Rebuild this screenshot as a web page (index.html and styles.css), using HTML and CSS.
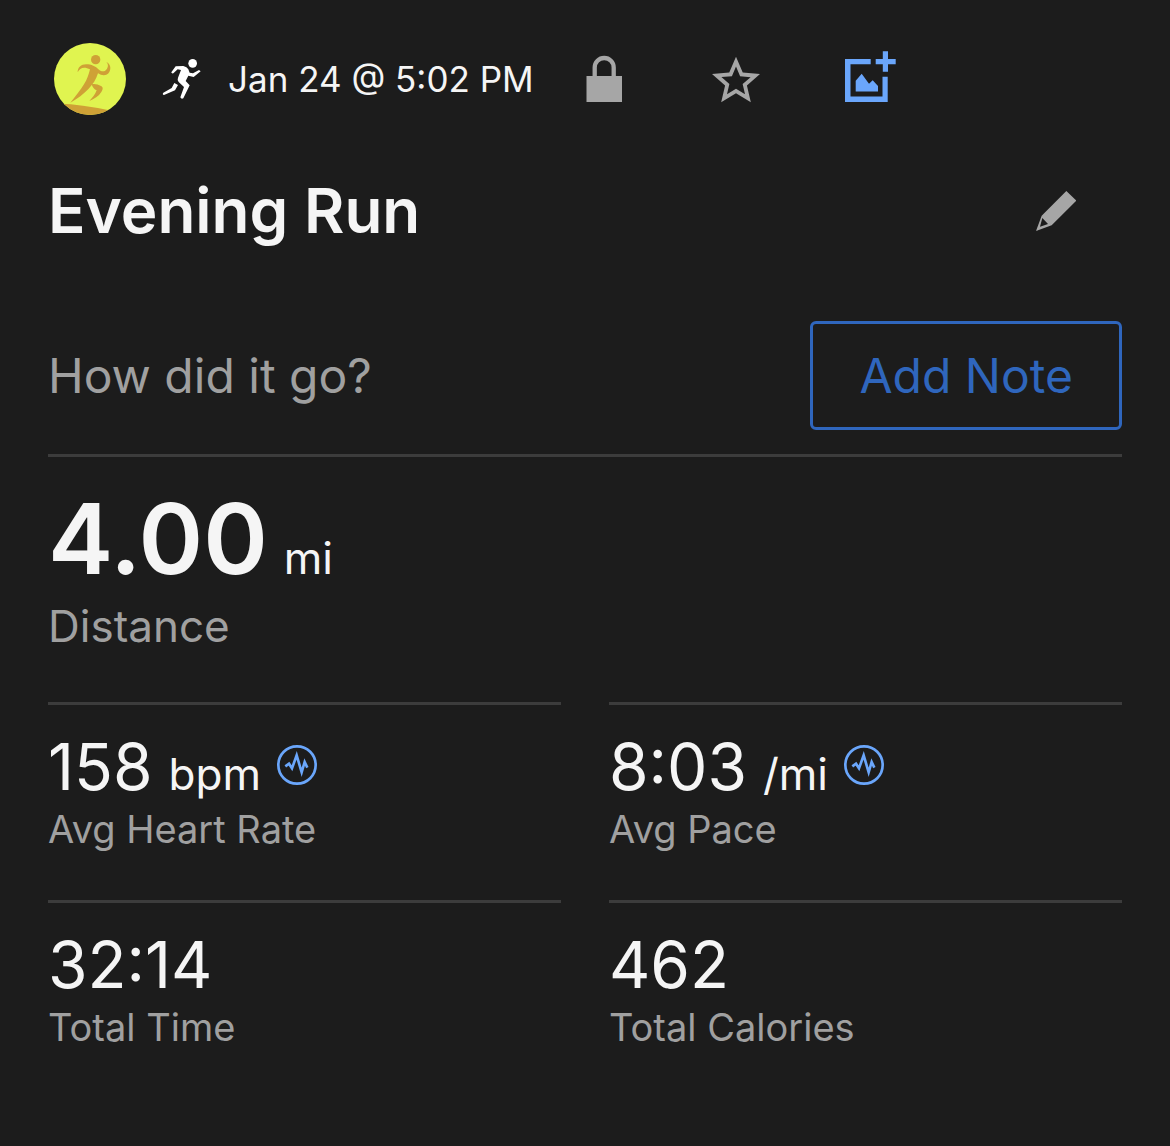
FILE: index.html
```
<!DOCTYPE html>
<html lang="en">
<head>
    <meta charset="UTF-8">
    <meta name="viewport" content="width=device-width, initial-scale=1.0">
    <title>Evening Run</title>
    <link rel="stylesheet" href="styles.css">
</head>
<body>

    <main class="activity">
        <!-- Avatar, date and quick actions -->
        <header class="activity-header">
            <svg class="avatar" viewBox="42 39 216 216" role="img" aria-label="Profile">
                <clipPath id="avatarClip"><circle cx="150" cy="147" r="108"/></clipPath>
                <g clip-path="url(#avatarClip)">
                    <rect x="42" y="39" width="216" height="216" fill="#e0f450"/>
                    <g fill="#cfa136">
                        <path d="M60 221Q120 222 215 242V260H60z"/>
                        <circle cx="167" cy="89" r="14"/>
                        <path d="M113 127C113 112 123 103 138 103C155 103 166 109 177 119C187 127 196 124 201 116C206 108 204 101 199 96C211 102 214 114 208 126C201 138 187 139 174 130C169 148 158 164 146 176C131 192 113 205 91 218C107 198 122 179 132 163C141 149 146 134 150 118C134 109 119 112 113 127z"/>
                        <path d="M155 163C163 160 174 163 183 168C190 172 189 178 184 186C176 199 163 207 148 213C158 203 166 192 170 181C163 179 157 172 155 163z"/>
                    </g>
                </g>
            </svg>
            <svg class="sport-icon" viewBox="364 84 120 126" role="img" aria-label="Run">
                <g fill="#ffffff">
                    <circle cx="456" cy="100" r="13"/>
                    <path d="M392 127L405 109L428 108Q439 110 443 118L447 128L457 130L475 120L480 124L459 141L443 137L435 153L447 166L428 205Q422 209 419 202L430 171L414 156Q409 150 412 143L421 120L411 118L398 130Q392 131 392 127z"/>
                    <path d="M401 159L412 165L403 181L370 195Q364 193 368 188L393 174z"/>
                </g>
            </svg>
            <time class="activity-date">Jan 24 @ 5:02 PM</time>
            <div class="header-actions">
                <button class="icon-button" type="button" aria-label="Privacy">
                    <svg class="icon" viewBox="0 0 48 48">
                        <rect x="6.5" y="21" width="35.5" height="26" fill="#a6a6a6"/>
                        <path d="M14.7 22V12.5a9.5 9.5 0 0 1 19 0V22" fill="none" stroke="#a6a6a6" stroke-width="4.3"/>
                    </svg>
                </button>
                <button class="icon-button" type="button" aria-label="Favorite">
                    <svg class="icon" viewBox="2 1.3 20 20">
                        <path fill="#a6a6a6" d="M22 9.24l-7.19-.62L12 2 9.19 8.63 2 9.24l5.46 4.73L5.82 21 12 17.27 18.18 21l-1.63-7.03L22 9.24zM12 15.4l-3.76 2.27 1-4.28-3.32-2.88 4.38-.38L12 6.1l1.71 4.04 4.38.38-3.32 2.88 1 4.28L12 15.4z"/>
                    </svg>
                </button>
                <button class="icon-button" type="button" aria-label="Add photo">
                    <svg class="icon-photo" viewBox="0 0 56 56">
                        <g fill="#6aa6fb">
                            <path d="M30.7 8H5v43h42.7V25.7h-5.2v19.8H10.5V13.2h20.2z"/>
                            <path d="M42.8.3h5.2V8h7.7v5.2H48v7.5h-5.2v-7.5h-7.1V8h7.1z"/>
                            <path d="M15.7 40.5V29.7l6-7L29 32.7l3.7-3.4L38 35v5.5z"/>
                        </g>
                    </svg>
                </button>
            </div>
        </header>

        <!-- Title -->
        <div class="title-row">
            <h1>Evening Run</h1>
            <button class="icon-button" type="button" aria-label="Edit name">
                <svg class="icon-edit" viewBox="48 33 120 120">
                    <path fill="#a6a6a6" fill-rule="evenodd" d="M139 33L169 62L95 136L48 153L65 107zM67 114L60 140L84 132z"/>
                </svg>
            </button>
        </div>

        <!-- Note -->
        <div class="note-row">
            <p>How did it go?</p>
            <button class="note-button" type="button">Add Note</button>
        </div>

        <!-- Stats -->
        <section class="stats">
            <div class="stat stat-main">
                <div class="stat-value">4.00 <span class="unit">mi</span></div>
                <div class="stat-label">Distance</div>
            </div>
            <div class="stat">
                <div class="stat-value">158 <span class="unit">bpm</span>
                    <button class="chart-button" type="button" aria-label="Heart rate chart">
                        <svg class="icon-chart" viewBox="714 49 120 120">
                            <circle cx="774" cy="109" r="56"/>
                            <path d="M739 113L750 105L759 119L773 80L788 131L797 100L805 117"/>
                        </svg>
                    </button>
                </div>
                <div class="stat-label">Avg Heart Rate</div>
            </div>
            <div class="stat">
                <div class="stat-value">8:03 <span class="unit">/mi</span>
                    <button class="chart-button" type="button" aria-label="Pace chart">
                        <svg class="icon-chart" viewBox="714 49 120 120">
                            <circle cx="774" cy="109" r="56"/>
                            <path d="M739 113L750 105L759 119L773 80L788 131L797 100L805 117"/>
                        </svg>
                    </button>
                </div>
                <div class="stat-label">Avg Pace</div>
            </div>
            <div class="stat">
                <div class="stat-value">32:14</div>
                <div class="stat-label">Total Time</div>
            </div>
            <div class="stat">
                <div class="stat-value">462</div>
                <div class="stat-label">Total Calories</div>
            </div>
        </section>
    </main>

</body>
</html>
```
FILE: styles.css
```
/* Base Styling */
* {
    box-sizing: border-box;
}
body {
    font-family: Inter, "Liberation Sans", sans-serif;
    background-color: #1c1c1c;
    color: #f5f5f5;
    margin: 0;
}
h1, p {
    margin: 0;
}
button {
    font-family: inherit;
    background: none;
    border: none;
    padding: 0;
    cursor: pointer;
}
svg {
    display: block;
}
.activity {
    padding: 43px 48px;
}

/* Header */
.activity-header {
    display: flex;
    align-items: center;
    padding-left: 6px;
}
.avatar {
    width: 72px;
    height: 72px;
    margin-right: 36px;
}
.sport-icon {
    width: 40px;
    height: 42px;
    margin-right: 26px;
}
.activity-date {
    font-size: 35px;
    line-height: 44px;
    margin-right: 4px;
    white-space: nowrap;
}
.header-actions {
    display: flex;
}
.icon-button {
    display: flex;
    justify-content: center;
    align-items: center;
    width: 132px;
    height: 72px;
}
.icon {
    width: 48px;
    height: 48px;
}
.icon-photo {
    width: 56px;
    height: 56px;
}
.icon-edit {
    width: 40px;
    height: 40px;
}

/* Title and note */
.title-row, .note-row {
    display: flex;
    justify-content: space-between;
    align-items: center;
}
.title-row {
    margin-top: 56px;
    margin-bottom: 70px;
}
.title-row h1 {
    font-size: 62px;
    font-weight: 600;
    line-height: 80px;
}
.note-row {
    margin-bottom: 24px;
}
.note-row p {
    color: #a0a0a0;
    font-size: 48px;
    line-height: 60px;
}
.note-button {
    border: 3px solid #2f66bd;
    border-radius: 6px;
    color: #2f66bd;
    font-size: 48px;
    line-height: 59px;
    padding: 22px 46px;
}

/* Stats */
.stats {
    display: grid;
    grid-template-columns: 1fr 1fr;
    column-gap: 48px;
}
.stat {
    border-top: 3px solid #3c3c3c;
    padding: 22px 0 49px;
}
.stat-main {
    grid-column: 1 / -1;
}
.stat-value {
    display: flex;
    align-items: baseline;
    gap: 16px;
    font-size: 64px;
    line-height: 80px;
}
.stat-main .stat-value {
    font-size: 98px;
    font-weight: 600;
    line-height: 120px;
}
.unit {
    font-size: 44px;
    font-weight: 400;
    line-height: 44px;
}
.stat-label {
    color: #a0a0a0;
    font-size: 38px;
    line-height: 44px;
}
.stat-main .stat-label {
    font-size: 44px;
    line-height: 54px;
}
.chart-button {
    align-self: center;
    padding-bottom: 4px;
}
.icon-chart {
    width: 40px;
    height: 40px;
    fill: none;
    stroke: #6aa6fb;
    stroke-width: 8;
}
```
